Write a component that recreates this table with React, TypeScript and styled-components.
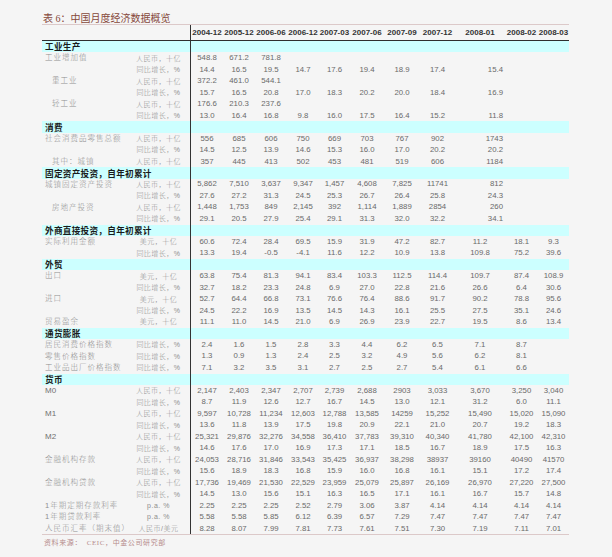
import React from "react";
import styled, { createGlobalStyle } from "styled-components";

const GlobalStyle = createGlobalStyle`
  html, body { margin: 0; padding: 0; background: #f5f5f5; }
  body { font-family: "Liberation Sans", Arial, sans-serif; }
`;

const COLS = [32, 32, 32, 32, 31, 34, 36, 35, 50, 33, 31];
const HEAD = ["2004-12", "2005-12", "2006-06", "2006-12", "2007-03", "2007-06", "2007-09", "2007-12", "2008-01", "2008-02", "2008-03"];

const CJK = `"Noto Sans CJK SC", "Noto Sans", sans-serif`;

const Page = styled.div`
  padding: 13px 0 0 42px;
  width: 527px;
`;

const Title = styled.div`
  font-family: "Liberation Serif", ${CJK};
  font-size: 10px;
  line-height: 11px;
  color: #86483a;
  padding-left: 1px;
`;

const Table = styled.div`
  border-top: 1px solid #dcc9c9;
  border-bottom: 1px solid #dcc9c9;
  display: flex;
  flex-direction: column;
`;

const HeaderRow = styled.div`
  display: flex;
  height: 15px;
  border-bottom: 1px solid #2e2e2e;
`;

const Row = styled.div<{ $section?: boolean }>`
  display: flex;
  height: 11.47px;
  background: ${(p) => (p.$section ? "#ccffff" : "transparent")};
`;

const LabelArea = styled.div`
  width: 148px;
  display: flex;
  align-items: center;
  flex-shrink: 0;
`;

const Label = styled.div<{ $indent?: boolean; $latin?: boolean }>`
  width: 85px;
  padding-left: ${(p) => (p.$indent ? 10 : 3)}px;
  box-sizing: border-box;
  font-family: "Liberation Sans", ${CJK};
  font-size: ${(p) => (p.$latin ? 8 : 7.5)}px;
  font-weight: 300;
  letter-spacing: ${(p) => (p.$latin ? 0 : 1)}px;
  color: ${(p) => (p.$latin ? "#707070" : "#8e8e8e")};
  white-space: nowrap;
  line-height: 1;
`;

const SectionLabel = styled.div`
  padding-left: 3px;
  font-family: ${CJK};
  font-weight: 700;
  font-size: 8.6px;
  letter-spacing: 0.3px;
  color: #1a1a1a;
  white-space: nowrap;
  line-height: 1;
`;

const Unit = styled.div`
  width: 63px;
  text-align: center;
  font-family: "Liberation Sans", ${CJK};
  font-size: 7px;
  font-weight: 300;
  letter-spacing: 0.5px;
  color: #8e8e8e;
  white-space: nowrap;
  line-height: 1;
`;

const DataArea = styled.div`
  display: flex;
  border-left: 1px solid #333;
  align-items: center;
`;

const Cell = styled.div<{ $w: number; $right?: boolean }>`
  width: ${(p) => p.$w}px;
  flex-shrink: 0;
  text-align: ${(p) => (p.$right ? "right" : "center")};
  padding-right: ${(p) => (p.$right ? 2 : 0)}px;
  box-sizing: border-box;
  font-size: 7.8px;
  color: #6a6a6a;
  white-space: nowrap;
  line-height: 1;
`;

const HeadCell = styled.div<{ $w: number }>`
  width: ${(p) => p.$w}px;
  flex-shrink: 0;
  text-align: center;
  font-size: 8px;
  font-weight: 700;
  color: #333;
  white-space: nowrap;
  line-height: 1;
`;

const Footer = styled.div`
  margin-top: 4px;
  padding-left: 2px;
  font-family: "Liberation Serif", ${CJK};
  font-size: 7px;
  line-height: 9px;
  color: #b58c8c;
  letter-spacing: 0.6px;
  white-space: nowrap;
`;

type DataRow = {
  kind: "data";
  label?: string;
  indent?: boolean;
  unit: string;
  values: string[];
  shifted?: boolean;
};
type SectionRow = { kind: "section"; label: string };
type TRow = DataRow | SectionRow;

const RMB = "人民币，十亿";
const YOY = "同比增长，%";
const USD = "美元，十亿";
const PA = "p.a. %";

const s = (label: string): SectionRow => ({ kind: "section", label });
const d = (label: string | undefined, unit: string, v: string, opts: Partial<DataRow> = {}): DataRow => ({
  kind: "data",
  label,
  unit,
  values: v.split(" ").map((x) => (x === "_" ? "" : x)),
  ...opts,
});

const ROWS: TRow[] = [
  s("工业生产"),
  d("工业增加值", RMB, "548.8 671.2 781.8 _ _ _ _ _ _ _ _"),
  d(undefined, YOY, "14.4 16.5 19.5 14.7 17.6 19.4 18.9 17.4 15.4 _ _", { shifted: true }),
  d("重工业", RMB, "372.2 461.0 544.1 _ _ _ _ _ _ _ _", { indent: true }),
  d(undefined, YOY, "15.7 16.5 20.8 17.0 18.3 20.2 20.0 18.4 16.9 _ _", { shifted: true }),
  d("轻工业", RMB, "176.6 210.3 237.6 _ _ _ _ _ _ _ _", { indent: true }),
  d(undefined, YOY, "13.0 16.4 16.8 9.8 16.0 17.5 16.4 15.2 11.8 _ _", { shifted: true }),
  s("消费"),
  d("社会消费品零售总额", RMB, "556 685 606 750 669 703 767 902 1743 _ _", { shifted: true }),
  d(undefined, YOY, "14.5 12.5 13.9 14.6 15.3 16.0 17.0 20.2 20.2 _ _", { shifted: true }),
  d("其中：城镇", RMB, "357 445 413 502 453 481 519 606 1184 _ _", { indent: true, shifted: true }),
  s("固定资产投资，自年初累计"),
  d("城镇固定资产投资", RMB, "5,862 7,510 3,637 9,347 1,457 4,608 7,825 11741 812 _ _", { shifted: true }),
  d(undefined, YOY, "27.6 27.2 31.3 24.5 25.3 26.7 26.4 25.8 24.3 _ _", { shifted: true }),
  d("房地产投资", RMB, "1,448 1,753 849 2,145 392 1,114 1,889 2854 260 _ _", { indent: true, shifted: true }),
  d(undefined, YOY, "29.1 20.5 27.9 25.4 29.1 31.3 32.0 32.2 34.1 _ _", { shifted: true }),
  s("外商直接投资，自年初累计"),
  d("实际利用金额", USD, "60.6 72.4 28.4 69.5 15.9 31.9 47.2 82.7 11.2 18.1 9.3"),
  d(undefined, YOY, "13.3 19.4 -0.5 -4.1 11.6 12.2 10.9 13.8 109.8 75.2 39.6"),
  s("外贸"),
  d("出口", USD, "63.8 75.4 81.3 94.1 83.4 103.3 112.5 114.4 109.7 87.4 108.9"),
  d(undefined, YOY, "32.7 18.2 23.3 24.8 6.9 27.0 22.8 21.6 26.6 6.4 30.6"),
  d("进口", USD, "52.7 64.4 66.8 73.1 76.6 76.4 88.6 91.7 90.2 78.8 95.6"),
  d(undefined, YOY, "24.5 22.2 16.9 13.5 14.5 14.3 16.1 25.5 27.5 35.1 24.6"),
  d("贸易盈余", USD, "11.1 11.0 14.5 21.0 6.9 26.9 23.9 22.7 19.5 8.6 13.4"),
  s("通货膨胀"),
  d("居民消费价格指数", YOY, "2.4 1.6 1.5 2.8 3.3 4.4 6.2 6.5 7.1 8.7 _"),
  d("零售价格指数", YOY, "1.3 0.9 1.3 2.4 2.5 3.2 4.9 5.6 6.2 8.1 _"),
  d("工业品出厂价格指数", YOY, "7.1 3.2 3.5 3.1 2.7 2.5 2.7 5.4 6.1 6.6 _"),
  s("货币"),
  d("M0", RMB, "2,147 2,403 2,347 2,707 2,739 2,688 2903 3,033 3,670 3,250 3,040"),
  d(undefined, YOY, "8.7 11.9 12.6 12.7 16.7 14.5 13.0 12.1 31.2 6.0 11.1"),
  d("M1", RMB, "9,597 10,728 11,234 12,603 12,788 13,585 14259 15,252 15,490 15,020 15,090"),
  d(undefined, YOY, "13.6 11.8 13.9 17.5 19.8 20.9 22.1 21.0 20.7 19.2 18.3"),
  d("M2", RMB, "25,321 29,876 32,276 34,558 36,410 37,783 39,310 40,340 41,780 42,100 42,310"),
  d(undefined, YOY, "14.6 17.6 17.0 16.9 17.3 17.1 18.5 16.7 18.9 17.5 16.3"),
  d("金融机构存款", RMB, "24,053 28,716 31,846 33,543 35,425 36,937 38,298 38937 39160 40490 41570"),
  d(undefined, YOY, "15.6 18.9 18.3 16.8 15.9 16.0 16.8 16.1 15.1 17.2 17.4"),
  d("金融机构贷款", RMB, "17,736 19,469 21,530 22,529 23,959 25,079 25,897 26,169 26,970 27,220 27,500"),
  d(undefined, YOY, "14.5 13.0 15.6 15.1 16.3 16.5 17.1 16.1 16.7 15.7 14.8"),
  d("1年期定期存款利率", PA, "2.25 2.25 2.25 2.52 2.79 3.06 3.87 4.14 4.14 4.14 4.14"),
  d("1年期贷款利率", PA, "5.58 5.58 5.85 6.12 6.39 6.57 7.29 7.47 7.47 7.47 7.47"),
  d("人民币汇率（期末值）", "人民币/美元", "8.28 8.07 7.99 7.81 7.73 7.61 7.51 7.30 7.19 7.11 7.01"),
];

const isLatin = (t?: string) => !!t && /^[A-Za-z0-9]+$/.test(t);

const DataPart: React.FC<{ values?: string[]; shifted?: boolean }> = ({ values, shifted }) => (
  <DataArea>
    {COLS.map((w, i) => (
      <Cell key={i} $w={w} $right={shifted && i === 8}>
        {values ? values[i] : ""}
      </Cell>
    ))}
  </DataArea>
);

export default function App() {
  return (
    <>
      <GlobalStyle />
      <Page>
        <Title>表 6：中国月度经济数据概览</Title>
        <Table>
          <HeaderRow>
            <LabelArea />
            <DataArea>
              {COLS.map((w, i) => (
                <HeadCell key={i} $w={w}>
                  {HEAD[i]}
                </HeadCell>
              ))}
            </DataArea>
          </HeaderRow>
          {ROWS.map((r, idx) =>
            r.kind === "section" ? (
              <Row key={idx} $section>
                <LabelArea>
                  <SectionLabel>{r.label}</SectionLabel>
                </LabelArea>
                <DataPart />
              </Row>
            ) : (
              <Row key={idx}>
                <LabelArea>
                  <Label $indent={r.indent} $latin={isLatin(r.label)}>
                    {r.label ?? ""}
                  </Label>
                  <Unit>{r.unit}</Unit>
                </LabelArea>
                <DataPart values={r.values} shifted={r.shifted} />
              </Row>
            )
          )}
        </Table>
        <Footer>资料来源：&nbsp;&nbsp;CEIC，中金公司研究部</Footer>
      </Page>
    </>
  );
}
